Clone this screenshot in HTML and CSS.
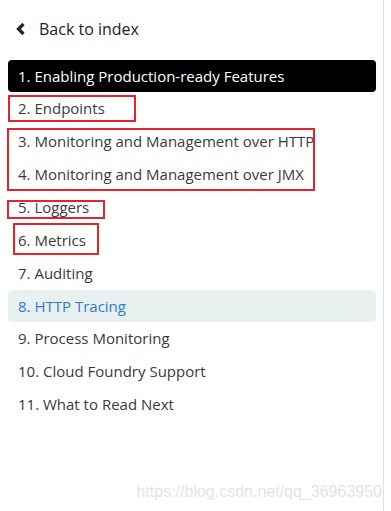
FILE: index.html
```html
<!DOCTYPE html>
<html lang="en">
  <head>
    <meta charset="UTF-8" />
    <meta name="viewport" content="width=device-width, initial-scale=1.0" />
    <title>Production-ready Features</title>
    <link rel="stylesheet" href="styles.css">
  </head>
  <body>
    <div class="side">
      <a class="back" href="#">
        <svg class="chev" width="12" height="14" viewBox="0 0 12 14">
          <path d="M8.5 2 L3.5 7 L8.5 12" fill="none" stroke="#222" stroke-width="3.2" />
        </svg>
        <span>Back to index</span>
      </a>
      <ul class="toc">
        <li class="active">1. Enabling Production-ready Features</li>
        <li>2. Endpoints</li>
        <li>3. Monitoring and Management over HTTP</li>
        <li>4. Monitoring and Management over JMX</li>
        <li>5. Loggers</li>
        <li>6. Metrics</li>
        <li>7. Auditing</li>
        <li class="current">8. HTTP Tracing</li>
        <li>9. Process Monitoring</li>
        <li>10. Cloud Foundry Support</li>
        <li>11. What to Read Next</li>
      </ul>
      <div class="mark m1"></div>
      <div class="mark m2"></div>
      <div class="mark m3"></div>
      <div class="mark m4"></div>
      <div class="wm">https://blog.csdn.net/qq_36963950</div>
    </div>
  </body>
</html>
```

FILE: styles.css
```css
body {
  margin: 0;
  background-color: #fff;
  font-family: "Open Sans", sans-serif;
}

.side {
  position: relative;
  width: 384px;
  height: 511px;
  border-right: 1px solid #d3e5e5;
  box-sizing: border-box;
  padding: 18px 8px 0 8px;
}

.back {
  display: flex;
  align-items: center;
  gap: 12px;
  height: 22px;
  padding-left: 7px;
  font-size: 16px;
  color: #222;
  text-decoration: none;
}

.toc {
  list-style: none;
  margin: 20px 0 0 0;
  padding: 0;
  width: 368px;
}

.toc li {
  height: 33px;
  line-height: 33px;
  padding-left: 10px;
  font-size: 15px;
  color: #3a3a3a;
  border-radius: 4px;
  white-space: nowrap;
}

.toc li.active {
  height: 32px;
  line-height: 32px;
  background-color: #000;
  color: #fff;
}

.toc li.current {
  height: 32px;
  line-height: 32px;
  background-color: #e8f0f0;
  color: #2f7bd3;
}

.mark {
  position: absolute;
  border: 2px solid #e3242b;
  box-sizing: border-box;
}

.m1 { left: 8px; top: 95px; width: 128px; height: 27px; }
.m2 { left: 7px; top: 128px; width: 308px; height: 63px; }
.m3 { left: 7px; top: 200px; width: 98px; height: 19px; }
.m4 { left: 13px; top: 223px; width: 86px; height: 32px; }

.wm {
  position: absolute;
  right: 1px;
  top: 483px;
  font-family: "Liberation Sans", Arial, sans-serif;
  font-size: 16px;
  color: #e4e4e4;
}
```
